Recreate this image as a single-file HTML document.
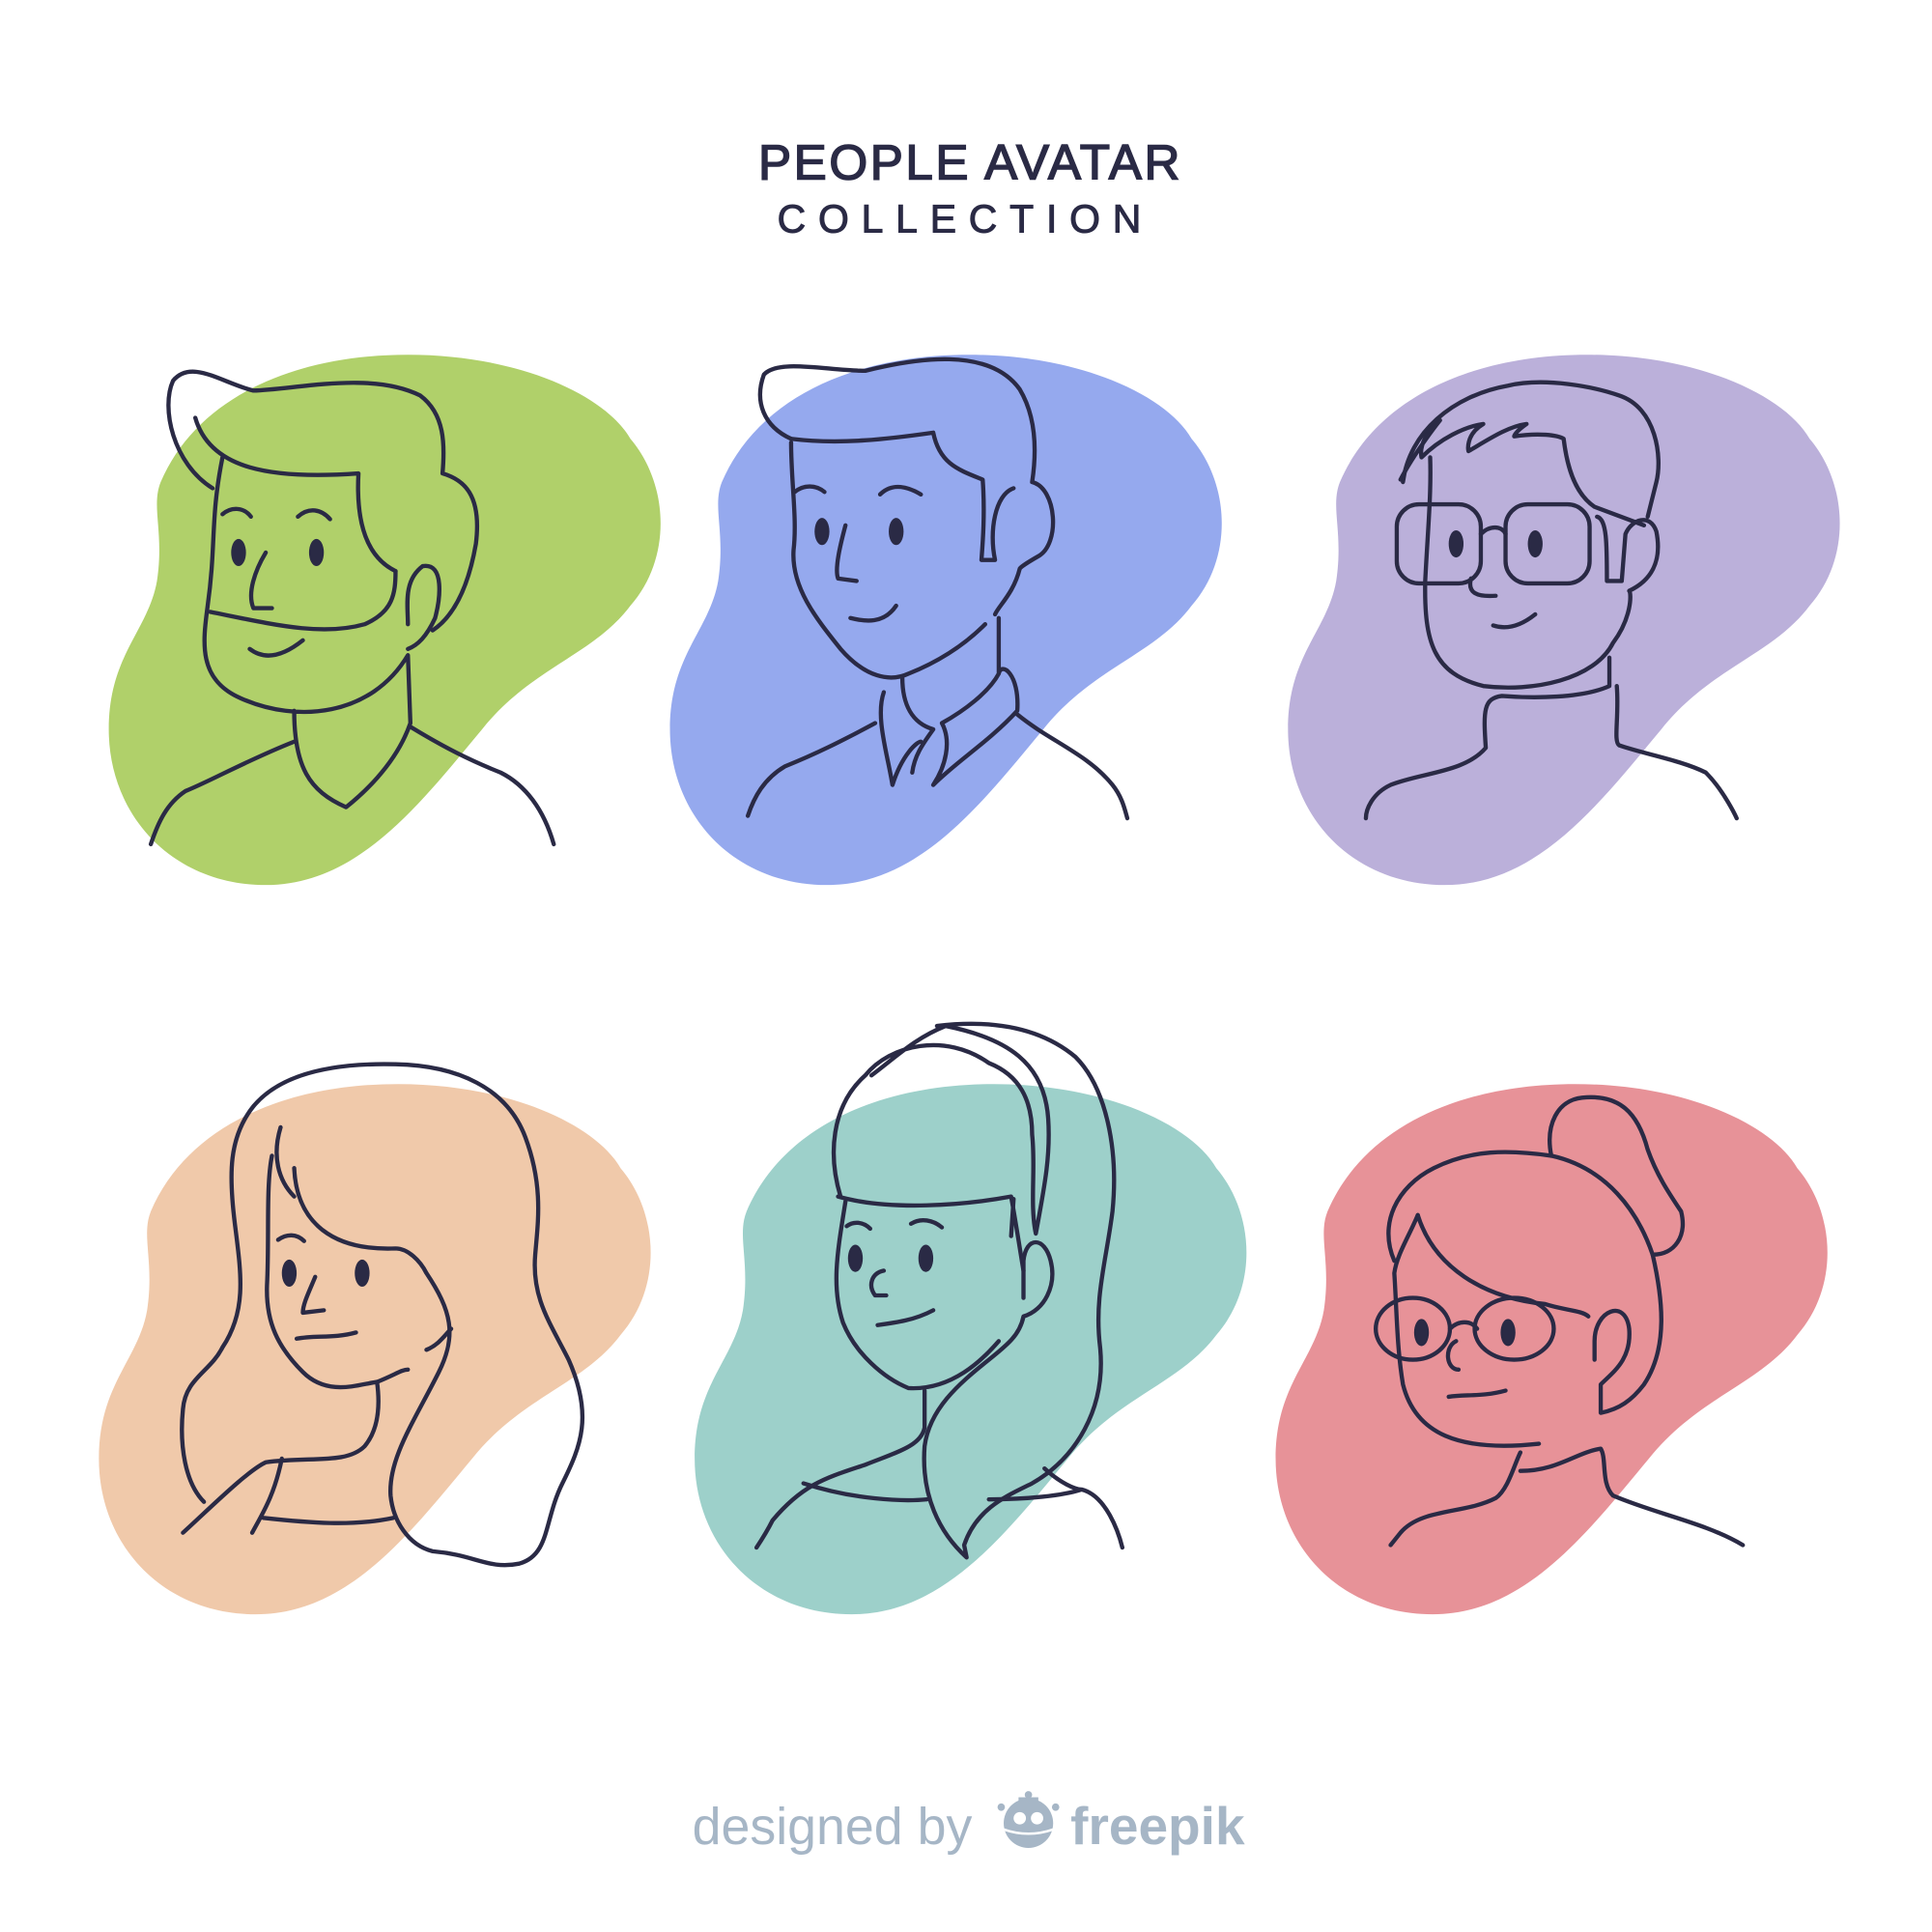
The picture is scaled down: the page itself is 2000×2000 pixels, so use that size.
<!DOCTYPE html>
<html><head><meta charset="utf-8"><style>
html,body{margin:0;padding:0;background:#fff}
svg{display:block}
</style></head><body>
<svg width="2000" height="2000" viewBox="0 0 1563 1563" xmlns="http://www.w3.org/2000/svg">
<defs>
<path id="blob" d="M130,390 C160,320 240,287 330,287 C420,287 490,320 510,355 C540,390 545,450 510,490 C480,530 430,540 390,590 C340,650 290,716 215,716 C140,716 88,660 88,590 C88,530 120,510 127,470 C133,430 122,410 130,390 Z"/>
</defs>
<rect width="1563" height="1563" fill="#fff"/>
<text x="785" y="145" text-anchor="middle" font-family="Liberation Sans, sans-serif" font-size="40" fill="#2a2a45" stroke="#2a2a45" stroke-width="1.2" letter-spacing="2">PEOPLE AVATAR</text>
<text x="781" y="188" text-anchor="middle" font-family="Liberation Sans, sans-serif" font-size="32" fill="#2a2a45" stroke="#2a2a45" stroke-width="0.8" letter-spacing="10">COLLECTION</text>

<use href="#blob" fill="#b0d06a"/>
<use href="#blob" fill="#95a9ee" transform="translate(454,0)"/>
<use href="#blob" fill="#bbb0da" transform="translate(954,0)"/>
<use href="#blob" fill="#f0c9aa" transform="translate(-8,590)"/>
<use href="#blob" fill="#9dd0ca" transform="translate(474,590)"/>
<use href="#blob" fill="#e79298" transform="translate(944,590)"/>

<g fill="none" stroke="#2a2a45" stroke-width="3.4" stroke-linecap="round" stroke-linejoin="round">
<!-- 1 -->
<path d="M172,395 C140,375 130,330 140,308 C155,290 180,310 205,316 C240,315 300,300 340,320 C360,335 360,360 358,383 C375,388 390,400 385,440 C378,480 365,500 350,510"/>
<path d="M158,338 C170,380 220,388 290,383 C288,420 295,450 320,462"/>
<path d="M180,370 C170,420 175,440 168,490 C164,520 160,550 195,565 C240,585 300,580 330,530 L332,585 C320,620 290,645 280,653 C250,640 238,620 238,575"/>
<path d="M170,495 C220,505 260,515 295,505 C318,495 320,480 320,462"/>
<path d="M330,505 C330,490 326,470 342,458 C360,455 356,485 352,500 C345,515 338,522 330,525"/>
<path d="M238,600 C200,615 170,632 150,640 C135,650 128,665 122,683"/>
<path d="M332,588 C360,605 380,615 405,625 C425,635 440,655 448,683"/>
<path d="M180,416 C187,410 197,410 203,418 M241,418 C250,410 260,412 267,420 M215,447 C206,462 200,480 205,492 L220,492 M202,525 C215,535 230,530 245,518"/>
<!-- 2 -->
<path d="M640,355 C618,345 610,325 618,303 C630,290 670,300 700,300 C740,290 800,280 825,315 C840,340 838,370 835,390 C855,395 858,440 840,450 C826,458 825,460 825,460 C820,480 808,490 805,497"/>
<path d="M640,355 C680,360 720,355 755,350 C760,375 775,380 795,388 C797,415 795,440 794,453 L805,453 C800,430 805,400 820,395"/>
<path d="M640,358 C640,390 645,420 642,445 C640,475 660,500 680,525 C700,548 720,552 735,545 C760,535 780,522 797,505"/>
<path d="M808,500 L808,545 C810,535 825,545 823,575 C800,600 775,615 755,635 C765,620 770,600 762,585 C780,575 800,560 808,545"/>
<path d="M730,548 C730,570 738,585 755,590 C748,600 740,610 738,625 M715,560 C708,580 718,610 722,635 C730,610 742,600 745,600"/>
<path d="M708,585 C680,600 660,610 635,620 C618,630 610,645 605,660"/>
<path d="M823,578 C850,600 880,610 900,635 C908,645 910,655 912,662"/>
<path d="M643,398 C650,392 660,392 667,398 M712,400 C722,390 735,394 745,400 M684,425 C680,440 675,460 678,468 L693,470 M688,500 C700,503 715,505 725,490"/>
<!-- 3 -->
<path d="M1135,390 C1140,350 1175,320 1220,312 C1250,305 1290,313 1310,320 C1340,330 1345,370 1340,390 L1333,418"/>
<path d="M1133,388 C1145,365 1165,340 1165,340 C1155,348 1148,360 1150,370 C1165,355 1185,345 1200,343 C1185,352 1188,365 1188,365 C1205,355 1220,345 1235,343 C1225,350 1225,353 1225,353 C1245,350 1260,352 1265,355 C1268,380 1275,400 1290,410 L1330,425"/>
<path d="M1157,370 C1158,400 1155,430 1153,470 C1152,520 1160,545 1200,555 C1240,560 1290,550 1305,520 C1320,500 1320,480 1318,478 C1335,470 1345,455 1340,430 C1335,415 1320,420 1315,432 L1312,470 L1300,470 C1300,440 1300,420 1292,418"/>
<rect x="1130" y="408" width="68" height="64" rx="18"/>
<rect x="1218" y="408" width="68" height="64" rx="18"/>
<path d="M1198,432 C1205,425 1215,425 1218,432"/>
<path d="M1302,532 L1302,555 C1280,565 1240,565 1215,563 C1200,565 1200,575 1202,605 C1185,625 1150,625 1125,635 C1110,642 1105,655 1105,662"/>
<path d="M1308,555 C1310,580 1305,600 1310,603 C1330,610 1360,615 1380,625 C1395,640 1405,662 1405,662"/>
<path d="M1190,468 C1187,480 1195,483 1210,482 M1208,506 C1220,510 1232,505 1242,497"/>
<!-- 4 -->
<path d="M165,1215 C150,1200 145,1170 148,1140 C150,1115 170,1110 180,1090 C200,1060 195,1030 190,990 C185,950 185,920 205,895 C230,865 280,860 320,861 C370,862 410,880 425,920 C440,960 435,990 433,1015 C430,1050 445,1070 460,1100 C480,1145 470,1170 455,1200 C440,1230 445,1258 420,1265 C395,1270 385,1258 350,1255 C330,1250 318,1230 316,1210 C314,1180 335,1150 355,1110 C370,1080 365,1060 345,1030 C340,1020 330,1010 320,1010 C270,1012 240,990 238,945"/>
<path d="M227,912 C220,935 225,955 238,968 M220,935 C215,960 218,1000 216,1040 C215,1070 225,1090 245,1110 C265,1130 290,1120 305,1118 C320,1112 325,1108 330,1108"/>
<path d="M365,1075 C360,1080 355,1088 345,1092"/>
<path d="M305,1118 C308,1140 305,1158 295,1170 C280,1185 250,1178 215,1183 C200,1190 170,1220 148,1240 M228,1180 C222,1210 212,1225 204,1240 M213,1228 C250,1232 285,1235 318,1228"/>
<path d="M225,1003 C232,998 240,998 246,1004 M255,1033 C250,1045 245,1055 245,1062 L262,1060 M240,1083 C255,1080 270,1083 288,1078"/>
<!-- 5 -->
<path d="M680,968 C670,935 672,895 700,870 C720,845 765,835 800,860 C825,870 835,890 835,918 C838,945 833,975 838,998 C845,960 850,935 848,905 C845,860 815,840 765,830 C740,840 725,855 705,870"/>
<path d="M758,830 C800,825 840,830 870,855 C895,880 905,930 900,980 C895,1020 885,1050 890,1090 C895,1140 870,1180 835,1200 C815,1210 790,1220 780,1250 L782,1260 C760,1240 745,1210 748,1170 C752,1140 775,1120 800,1100 C815,1088 825,1080 828,1065 C845,1060 855,1040 850,1020 C845,1000 830,1000 828,1020 L828,1050 M818,1000 L820,970"/>
<path d="M678,968 C720,980 780,975 818,968 C822,990 825,1010 828,1028"/>
<path d="M684,972 C678,1010 672,1040 682,1070 C692,1095 715,1115 735,1123 C770,1125 795,1100 808,1085"/>
<path d="M748,1125 L748,1155 C745,1170 725,1175 700,1185 C670,1195 650,1200 625,1230 C620,1240 612,1252 612,1252 M650,1200 C690,1213 730,1215 750,1213 M800,1213 C830,1213 860,1210 875,1205 C895,1210 905,1240 908,1252 M845,1188 C858,1200 870,1205 875,1205"/>
<path d="M685,992 C690,988 698,988 704,994 M737,990 C745,985 755,987 762,993 M715,1028 C705,1030 702,1040 708,1048 L717,1048 M710,1072 C725,1070 740,1068 755,1060"/>
<!-- 6 -->
<path d="M1128,1020 C1115,990 1130,960 1160,945 C1190,930 1220,930 1255,935 C1300,945 1325,980 1337,1015 C1345,1050 1350,1090 1330,1120 C1320,1133 1310,1140 1295,1143 L1295,1120 C1305,1110 1320,1100 1318,1075 C1315,1050 1290,1060 1290,1085 L1290,1100"/>
<path d="M1255,935 C1250,910 1260,890 1280,888 C1310,885 1325,900 1333,930 C1340,950 1350,965 1360,980 C1365,1000 1355,1015 1337,1015"/>
<path d="M1147,983 C1140,1000 1130,1015 1128,1030 C1130,1060 1130,1090 1135,1120 C1145,1160 1180,1175 1245,1168"/>
<path d="M1147,983 C1160,1025 1200,1050 1250,1055 C1265,1060 1280,1060 1285,1065"/>
<ellipse cx="1143" cy="1075" rx="30" ry="25"/>
<ellipse cx="1225" cy="1075" rx="32" ry="25"/>
<path d="M1173,1075 C1180,1068 1190,1068 1195,1075"/>
<path d="M1178,1085 C1168,1090 1170,1108 1180,1108 M1172,1130 C1185,1128 1200,1130 1218,1125"/>
<path d="M1230,1175 C1225,1185 1220,1205 1210,1212 C1185,1225 1150,1220 1133,1240 L1125,1250 M1230,1190 C1260,1190 1275,1175 1295,1172 C1300,1180 1295,1200 1305,1210 C1340,1225 1380,1232 1410,1250"/>
</g>
<g fill="#2a2a45">
<ellipse cx="193" cy="447" rx="6" ry="11"/><ellipse cx="256" cy="447" rx="6" ry="11"/>
<ellipse cx="665" cy="430" rx="6" ry="11"/><ellipse cx="725" cy="430" rx="6" ry="11"/>
<ellipse cx="1178" cy="440" rx="6" ry="11"/><ellipse cx="1242" cy="440" rx="6" ry="11"/>
<ellipse cx="234" cy="1030" rx="6" ry="11"/><ellipse cx="293" cy="1030" rx="6" ry="11"/>
<ellipse cx="692" cy="1018" rx="6" ry="11"/><ellipse cx="749" cy="1018" rx="6" ry="11"/>
<ellipse cx="1150" cy="1078" rx="6" ry="11"/><ellipse cx="1220" cy="1078" rx="6" ry="11"/>
</g>
<text x="560" y="1492" font-family="Liberation Sans, sans-serif" font-size="42" fill="#a6b6c6">designed by</text>
<g fill="#a6b6c6">
<circle cx="832" cy="1475" r="20"/>
<circle cx="832" cy="1452" r="3"/><rect x="824" y="1454" width="16" height="3"/>
<circle cx="810" cy="1462" r="3"/><circle cx="854" cy="1462" r="3"/>
</g>
<circle cx="825" cy="1471" r="5" fill="#fff"/><circle cx="839" cy="1471" r="5" fill="#fff"/>
<path d="M812,1480 Q832,1487 852,1480" stroke="#fff" stroke-width="2" fill="none"/>
<text x="866" y="1492" font-family="Liberation Sans, sans-serif" font-size="43" font-weight="bold" fill="#a6b6c6">freepik</text>
</svg>
</body></html>
